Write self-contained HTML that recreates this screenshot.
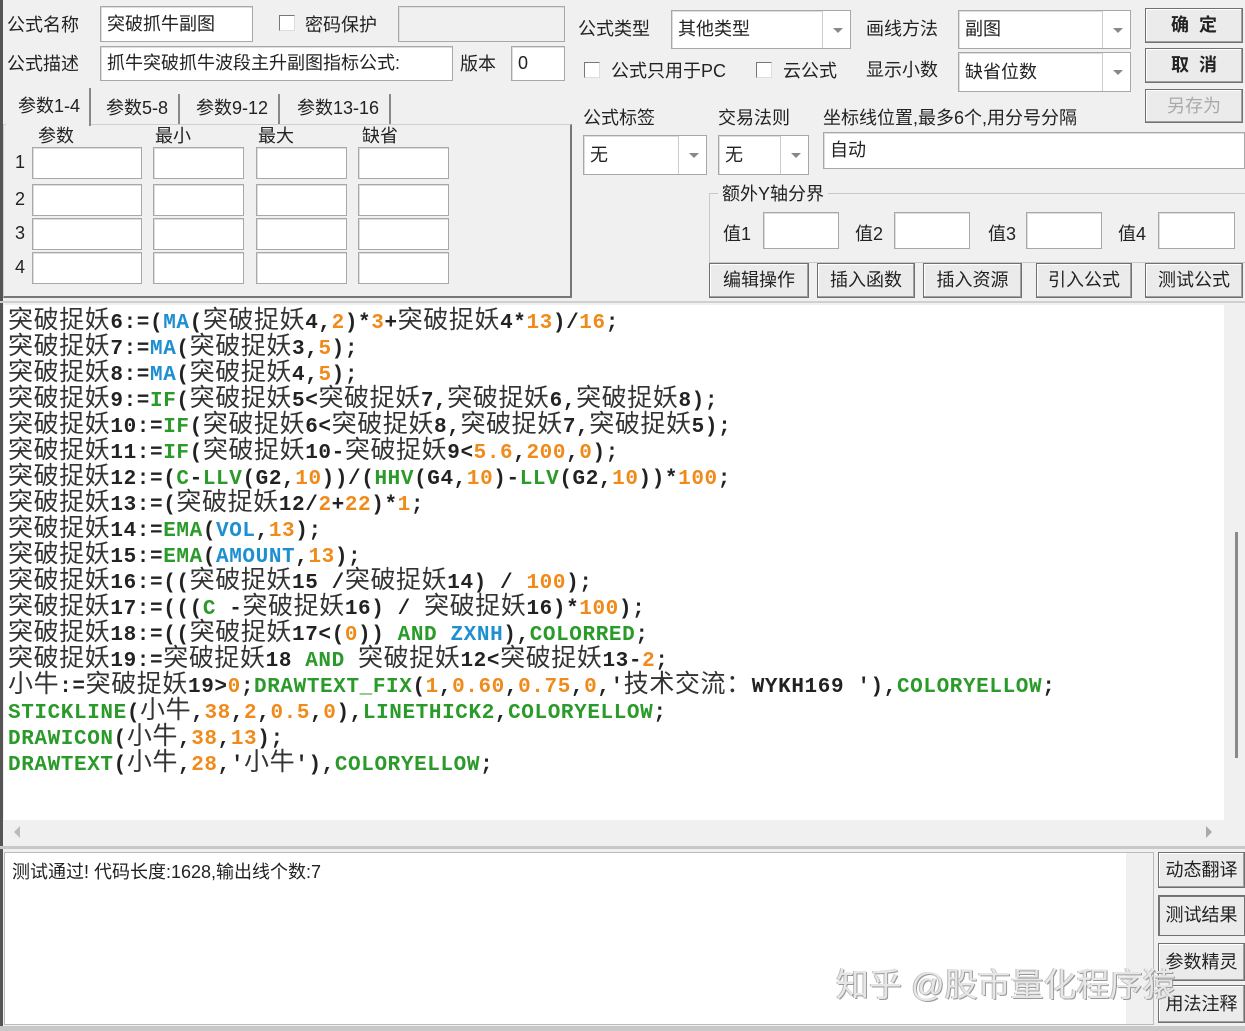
<!DOCTYPE html>
<html><head><meta charset="utf-8">
<style>
*{box-sizing:border-box;margin:0;padding:0}
body{width:1245px;height:1031px;background:#f0f0f0;position:relative;overflow:hidden;font-family:"Liberation Sans","Noto Sans CJK SC",sans-serif;font-size:18px;color:#222}
.a{position:absolute;white-space:nowrap}
.in{position:absolute;background:#fff;border:1px solid #a8a8a8;box-shadow:inset 1px 1px 0 #ddd;font-size:18px;padding-left:6px;white-space:nowrap;overflow:hidden}
.cb{position:absolute;width:16px;height:16px;background:#fff;border:1px solid #777;border-right-color:#ddd;border-bottom-color:#ddd}
.combo .dd{position:absolute;right:0;top:0;bottom:0;width:28px;border-left:1px solid #ccc;background:#fff}
.combo .dd:after{content:"";position:absolute;left:10px;top:50%;margin-top:-2px;border-left:5px solid transparent;border-right:5px solid transparent;border-top:5px solid #888}
.btn{position:absolute;background:#ebebeb;border:1px solid #707070;box-shadow:inset -1px -1px 0 #a0a0a0,inset 1px 1px 0 #fff;text-align:center;font-size:18px;white-space:nowrap}
#code{position:absolute;left:4px;top:305px;width:1220px;height:515px;background:#fff;padding:0 0 0 4px;overflow:hidden}
.ln{height:26px;line-height:26px;white-space:pre;font-family:"Liberation Mono",monospace;font-weight:bold;font-size:21px;color:#222;letter-spacing:.6px}
.ln i{font-style:normal;font-weight:normal;font-family:"Noto Sans CJK SC",sans-serif;font-size:25px;color:#333;letter-spacing:.6px}
.ln b{color:#1e8fd0}
.ln s{text-decoration:none;color:#2a9a2a}
.ln em{font-style:normal;color:#f08a1a}
</style></head><body>
<div class="a" style="left:0;top:0;width:3px;height:1031px;background:#555"></div>
<div class="a" style="left:7px;top:11px">公式名称</div>
<div class="in" style="left:100px;top:6px;width:153px;height:36px;line-height:34px">突破抓牛副图</div>
<div class="cb" style="left:279px;top:15px"></div>
<div class="a" style="left:305px;top:11px">密码保护</div>
<div class="in" style="left:398px;top:6px;width:167px;height:36px;background:#f0f0f0"></div>
<div class="a" style="left:7px;top:50px">公式描述</div>
<div class="in" style="left:100px;top:46px;width:353px;height:35px;line-height:33px">抓牛突破抓牛波段主升副图指标公式:</div>
<div class="a" style="left:460px;top:50px">版本</div>
<div class="in" style="left:511px;top:46px;width:54px;height:35px;line-height:33px">0</div>
<div class="a" style="left:3px;top:124px;width:569px;height:174px;border:1px solid #d0d0d0;border-right:2px solid #777;border-bottom:2px solid #777;background:#f0f0f0"></div>
<div class="a" style="left:6px;top:88px;width:85px;height:38px;background:#f0f0f0;border-right:2px solid #888;padding:4px 0 0 12px">参数1-4</div>
<div class="a" style="left:94px;top:94px;height:30px;border-right:2px solid #888;padding:0 10px 0 12px">参数5-8</div>
<div class="a" style="left:184px;top:94px;height:30px;border-right:2px solid #888;padding:0 10px 0 12px">参数9-12</div>
<div class="a" style="left:285px;top:94px;height:30px;border-right:2px solid #888;padding:0 10px 0 12px">参数13-16</div>
<div class="a" style="left:38px;top:122px">参数</div>
<div class="a" style="left:155px;top:122px">最小</div>
<div class="a" style="left:258px;top:122px">最大</div>
<div class="a" style="left:362px;top:122px">缺省</div>
<div class="a" style="left:15px;top:152px">1</div>
<div class="a" style="left:15px;top:189px">2</div>
<div class="a" style="left:15px;top:223px">3</div>
<div class="a" style="left:15px;top:257px">4</div>
<div class="in" style="left:32px;top:147px;width:110px;height:32px"></div><div class="in" style="left:153px;top:147px;width:91px;height:32px"></div><div class="in" style="left:256px;top:147px;width:91px;height:32px"></div><div class="in" style="left:358px;top:147px;width:91px;height:32px"></div>
<div class="in" style="left:32px;top:184px;width:110px;height:32px"></div><div class="in" style="left:153px;top:184px;width:91px;height:32px"></div><div class="in" style="left:256px;top:184px;width:91px;height:32px"></div><div class="in" style="left:358px;top:184px;width:91px;height:32px"></div>
<div class="in" style="left:32px;top:218px;width:110px;height:32px"></div><div class="in" style="left:153px;top:218px;width:91px;height:32px"></div><div class="in" style="left:256px;top:218px;width:91px;height:32px"></div><div class="in" style="left:358px;top:218px;width:91px;height:32px"></div>
<div class="in" style="left:32px;top:252px;width:110px;height:32px"></div><div class="in" style="left:153px;top:252px;width:91px;height:32px"></div><div class="in" style="left:256px;top:252px;width:91px;height:32px"></div><div class="in" style="left:358px;top:252px;width:91px;height:32px"></div>
<div class="a" style="left:578px;top:15px">公式类型</div>
<div class="in combo" style="left:671px;top:10px;width:180px;height:39px;line-height:37px">其他类型<span class="dd"></span></div>
<div class="a" style="left:866px;top:15px">画线方法</div>
<div class="in combo" style="left:958px;top:10px;width:173px;height:39px;line-height:37px">副图<span class="dd"></span></div>
<div class="btn" style="left:1145px;top:8px;width:98px;height:35px;line-height:33px;font-weight:bold">确&nbsp;&nbsp;定</div>
<div class="cb" style="left:584px;top:62px"></div>
<div class="a" style="left:611px;top:57px">公式只用于PC</div>
<div class="cb" style="left:756px;top:62px"></div>
<div class="a" style="left:783px;top:57px">云公式</div>
<div class="a" style="left:866px;top:56px">显示小数</div>
<div class="in combo" style="left:958px;top:52px;width:173px;height:40px;line-height:38px">缺省位数<span class="dd"></span></div>
<div class="btn" style="left:1145px;top:48px;width:98px;height:35px;line-height:33px;font-weight:bold">取&nbsp;&nbsp;消</div>
<div class="btn" style="left:1145px;top:89px;width:98px;height:34px;line-height:32px;color:#aaa">另存为</div>
<div class="a" style="left:583px;top:104px">公式标签</div>
<div class="a" style="left:718px;top:104px">交易法则</div>
<div class="a" style="left:823px;top:104px">坐标线位置,最多6个,用分号分隔</div>
<div class="in combo" style="left:583px;top:135px;width:124px;height:40px;line-height:38px">无<span class="dd"></span></div>
<div class="in combo" style="left:718px;top:135px;width:91px;height:40px;line-height:38px">无<span class="dd"></span></div>
<div class="in" style="left:823px;top:132px;width:422px;height:37px;line-height:35px">自动</div>
<div class="a" style="left:709px;top:193px;width:540px;height:70px;border:1px solid #c8c8c8"></div>
<div class="a" style="left:718px;top:180px;background:#f0f0f0;padding:0 4px">额外Y轴分界</div>
<div class="a" style="left:723px;top:220px">值1</div><div class="in" style="left:763px;top:212px;width:76px;height:37px"></div>
<div class="a" style="left:855px;top:220px">值2</div><div class="in" style="left:894px;top:212px;width:76px;height:37px"></div>
<div class="a" style="left:988px;top:220px">值3</div><div class="in" style="left:1026px;top:212px;width:76px;height:37px"></div>
<div class="a" style="left:1118px;top:220px">值4</div><div class="in" style="left:1158px;top:212px;width:77px;height:37px"></div>
<div class="btn" style="left:709px;top:263px;width:100px;height:35px;line-height:33px">编辑操作</div>
<div class="btn" style="left:817px;top:263px;width:98px;height:35px;line-height:33px">插入函数</div>
<div class="btn" style="left:923px;top:263px;width:99px;height:35px;line-height:33px">插入资源</div>
<div class="btn" style="left:1036px;top:263px;width:96px;height:35px;line-height:33px">引入公式</div>
<div class="btn" style="left:1145px;top:263px;width:98px;height:35px;line-height:33px">测试公式</div>
<div class="a" style="left:0;top:301px;width:1245px;height:2px;background:#d0d0d0"></div>
<div id="code">
<div class="ln"><i>突破捉妖</i>6:=(<b>MA</b>(<i>突破捉妖</i>4,<em>2</em>)*<em>3</em>+<i>突破捉妖</i>4*<em>13</em>)/<em>16</em>;</div>
<div class="ln"><i>突破捉妖</i>7:=<b>MA</b>(<i>突破捉妖</i>3,<em>5</em>);</div>
<div class="ln"><i>突破捉妖</i>8:=<b>MA</b>(<i>突破捉妖</i>4,<em>5</em>);</div>
<div class="ln"><i>突破捉妖</i>9:=<s>IF</s>(<i>突破捉妖</i>5&lt;<i>突破捉妖</i>7,<i>突破捉妖</i>6,<i>突破捉妖</i>8);</div>
<div class="ln"><i>突破捉妖</i>10:=<s>IF</s>(<i>突破捉妖</i>6&lt;<i>突破捉妖</i>8,<i>突破捉妖</i>7,<i>突破捉妖</i>5);</div>
<div class="ln"><i>突破捉妖</i>11:=<s>IF</s>(<i>突破捉妖</i>10-<i>突破捉妖</i>9&lt;<em>5.6</em>,<em>200</em>,<em>0</em>);</div>
<div class="ln"><i>突破捉妖</i>12:=(<s>C</s>-<s>LLV</s>(G2,<em>10</em>))/(<s>HHV</s>(G4,<em>10</em>)-<s>LLV</s>(G2,<em>10</em>))*<em>100</em>;</div>
<div class="ln"><i>突破捉妖</i>13:=(<i>突破捉妖</i>12/<em>2</em>+<em>22</em>)*<em>1</em>;</div>
<div class="ln"><i>突破捉妖</i>14:=<s>EMA</s>(<b>VOL</b>,<em>13</em>);</div>
<div class="ln"><i>突破捉妖</i>15:=<s>EMA</s>(<b>AMOUNT</b>,<em>13</em>);</div>
<div class="ln"><i>突破捉妖</i>16:=((<i>突破捉妖</i>15 /<i>突破捉妖</i>14) / <em>100</em>);</div>
<div class="ln"><i>突破捉妖</i>17:=(((<s>C</s> -<i>突破捉妖</i>16) / <i>突破捉妖</i>16)*<em>100</em>);</div>
<div class="ln"><i>突破捉妖</i>18:=((<i>突破捉妖</i>17&lt;(<em>0</em>)) <s>AND</s> <b>ZXNH</b>),<s>COLORRED</s>;</div>
<div class="ln"><i>突破捉妖</i>19:=<i>突破捉妖</i>18 <s>AND</s> <i>突破捉妖</i>12&lt;<i>突破捉妖</i>13-<em>2</em>;</div>
<div class="ln"><i>小牛</i>:=<i>突破捉妖</i>19&gt;<em>0</em>;<s>DRAWTEXT_FIX</s>(<em>1</em>,<em>0.60</em>,<em>0.75</em>,<em>0</em>,'<i>技术交流：</i>WYKH169 '),<s>COLORYELLOW</s>;</div>
<div class="ln"><s>STICKLINE</s>(<i>小牛</i>,<em>38</em>,<em>2</em>,<em>0.5</em>,<em>0</em>),<s>LINETHICK2</s>,<s>COLORYELLOW</s>;</div>
<div class="ln"><s>DRAWICON</s>(<i>小牛</i>,<em>38</em>,<em>13</em>);</div>
<div class="ln"><s>DRAWTEXT</s>(<i>小牛</i>,<em>28</em>,'<i>小牛</i>'),<s>COLORYELLOW</s>;</div>
</div>
<div class="a" style="left:1235px;top:532px;width:3px;height:226px;background:#8a8a8a"></div>
<div class="a" style="left:14px;top:826px;border-top:6px solid transparent;border-bottom:6px solid transparent;border-right:6px solid #bbb"></div>
<div class="a" style="left:1206px;top:826px;border-top:6px solid transparent;border-bottom:6px solid transparent;border-left:6px solid #aaa"></div>
<div class="a" style="left:0;top:846px;width:1245px;height:3px;background:#c8c8c8"></div>
<div class="a" style="left:4px;top:852px;width:1150px;height:173px;background:#fff;border:1px solid #bbb"></div>
<div class="a" style="left:1126px;top:853px;width:27px;height:171px;background:#f0f0f0"></div>
<div class="a" style="left:12px;top:858px;font-size:18px;color:#222">测试通过! 代码长度:1628,输出线个数:7</div>
<div class="btn" style="left:1158px;top:852px;width:87px;height:36px;line-height:34px">动态翻译</div>
<div class="btn" style="left:1158px;top:895px;width:87px;height:41px;line-height:39px;box-shadow:inset 1px 1px 0 #777">测试结果</div>
<div class="btn" style="left:1158px;top:943px;width:87px;height:38px;line-height:36px">参数精灵</div>
<div class="btn" style="left:1158px;top:985px;width:87px;height:38px;line-height:36px">用法注释</div>
<div class="a" style="left:836px;top:958px;font-size:33px;color:#e6e6e6;text-shadow:1px 1px 0 #999,-1px 0 0 #bbb">知乎 @股市量化程序猿</div>
<div class="a" style="left:0;top:1026px;width:1245px;height:5px;background:#c8c8c8"></div>
</body></html>
